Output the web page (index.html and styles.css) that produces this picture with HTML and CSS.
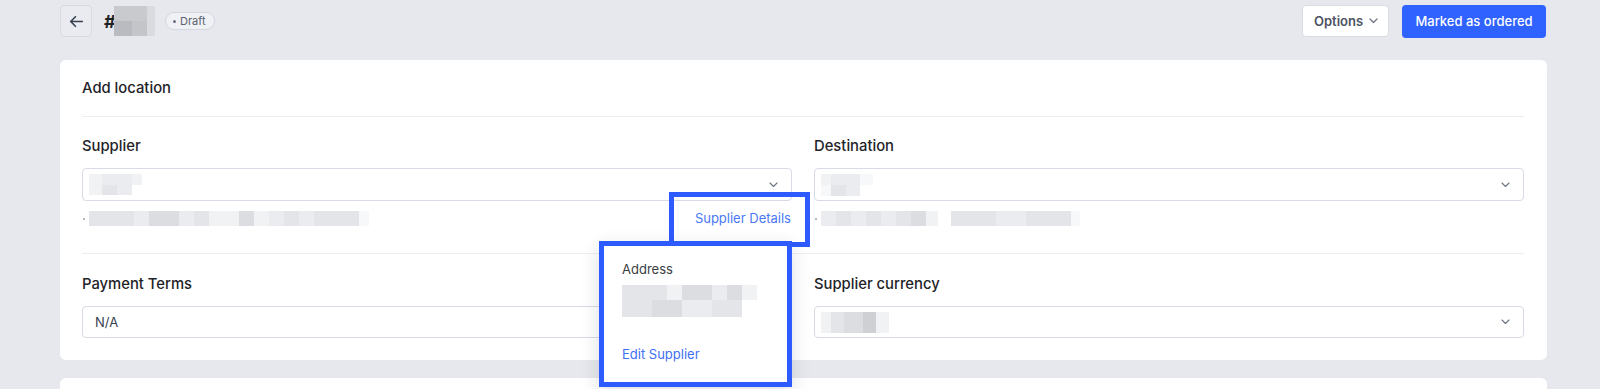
FILE: index.html
```html
<html>
  <head>
    <link rel="stylesheet" href="styles.css">
    <title>Purchase order</title>
  </head>
  <body>
    <div class="page">
      <div class="topbar">
        <div class="topbar-left">
          <button class="back-btn">
            <svg width="17" height="17" viewBox="0 0 16 16" fill="none" stroke="#374151" stroke-width="1.5" stroke-linecap="round" stroke-linejoin="round"><path d="M13.5 8H2.5M7 3.5L2.5 8 7 12.5"/></svg>
          </button>
          <div class="order-id">
            <span class="hash">#</span>
            <div class="blur">
              <div class="blur-row h15"><span class="d2 w18"></span><span class="d2 w15"></span><span class="d4 w8"></span></div>
              <div class="blur-row h15"><span class="d1 w18"></span><span class="d3 w15"></span><span class="d4 w8"></span></div>
            </div>
          </div>
          <span class="pill"><span class="pill-dot"></span>Draft</span>
        </div>
        <div class="topbar-right">
          <button class="btn btn-outline">Options
            <svg width="9" height="6" viewBox="0 0 9 6" fill="none" stroke="#6b7280" stroke-width="1.2" stroke-linecap="round" stroke-linejoin="round"><path d="M1 1l3.5 3.5L8 1"/></svg>
          </button>
          <button class="btn btn-primary">Marked as ordered</button>
        </div>
      </div>

      <div class="card">
        <div class="card-head">Add location</div>

        <div class="card-row">
          <div class="field">
            <div class="label">Supplier</div>
            <div class="select">
              <div class="blur">
                <div class="blur-row h11"><span class="g1 w13"></span><span class="g2 w15"></span><span class="g2 w15"></span><span class="g1 w10"></span></div>
                <div class="blur-row h10"><span class="g1 w13"></span><span class="g3 w15"></span><span class="g2 w15"></span></div>
              </div>
              <svg class="chevron" width="9" height="6" viewBox="0 0 9 6" fill="none" stroke="#6b7280" stroke-width="1.1" stroke-linecap="round" stroke-linejoin="round"><path d="M1 1l3.5 3.5L8 1"/></svg>
            </div>
            <div class="sub">
              <div class="sub-info">
                <span class="tiny-dot"></span>
                <div class="blur-row h15">
                  <span class="g3 w15"></span><span class="g3 w15"></span><span class="g3 w15"></span><span class="g2 w15"></span><span class="g4 w15"></span><span class="g4 w15"></span><span class="g2 w15"></span><span class="g3 w15"></span><span class="g1 w15"></span><span class="g1 w15"></span><span class="g4 w15"></span><span class="g1 w15"></span><span class="g2 w15"></span><span class="g3 w15"></span><span class="g2 w15"></span><span class="g3 w15"></span><span class="g3 w15"></span><span class="g3 w15"></span><span class="g0 w10"></span>
                </div>
              </div>
              <a class="details-link">Supplier Details</a>
            </div>
          </div>

          <div class="field">
            <div class="label">Destination</div>
            <div class="select">
              <div class="blur">
                <div class="blur-row h11"><span class="g1 w10"></span><span class="g2 w15"></span><span class="g2 w14"></span><span class="g0 w13"></span></div>
                <div class="blur-row h11"><span class="g0 w10"></span><span class="g3 w15"></span><span class="g2 w14"></span></div>
              </div>
              <svg class="chevron" width="9" height="6" viewBox="0 0 9 6" fill="none" stroke="#6b7280" stroke-width="1.1" stroke-linecap="round" stroke-linejoin="round"><path d="M1 1l3.5 3.5L8 1"/></svg>
            </div>
            <div class="sub">
              <div class="sub-info">
                <span class="tiny-dot"></span>
                <div class="blur-row h15">
                  <span class="g2 w15"></span><span class="g3 w15"></span><span class="g2 w15"></span><span class="g3 w15"></span><span class="g2 w15"></span><span class="g3 w15"></span><span class="g4 w15"></span><span class="g1 w12"></span>
                </div>
                <div class="blur-row h15 gap-left">
                  <span class="g3 w15"></span><span class="g3 w15"></span><span class="g3 w15"></span><span class="g2 w15"></span><span class="g2 w15"></span><span class="g3 w15"></span><span class="g3 w15"></span><span class="g3 w15"></span><span class="g0 w9"></span>
                </div>
              </div>
            </div>
          </div>
        </div>

        <div class="card-row last">
          <div class="field">
            <div class="label">Payment Terms</div>
            <div class="select">
              <span class="select-text">N/A</span>
              <svg class="chevron" width="9" height="6" viewBox="0 0 9 6" fill="none" stroke="#6b7280" stroke-width="1.1" stroke-linecap="round" stroke-linejoin="round"><path d="M1 1l3.5 3.5L8 1"/></svg>
            </div>
          </div>

          <div class="field">
            <div class="label">Supplier currency</div>
            <div class="select">
              <div class="blur">
                <div class="blur-row h21"><span class="g1 w10"></span><span class="g3 w13"></span><span class="g4 w19"></span><span class="g5 w13"></span><span class="g1 w13"></span></div>
              </div>
              <svg class="chevron" width="9" height="6" viewBox="0 0 9 6" fill="none" stroke="#6b7280" stroke-width="1.1" stroke-linecap="round" stroke-linejoin="round"><path d="M1 1l3.5 3.5L8 1"/></svg>
            </div>
          </div>
        </div>

        <div class="popover">
          <div class="popover-title">Address</div>
          <div class="blur">
            <div class="blur-row h15"><span class="g3 w15"></span><span class="g3 w15"></span><span class="g3 w15"></span><span class="g1 w15"></span><span class="g4 w15"></span><span class="g4 w15"></span><span class="g2 w15"></span><span class="g4 w15"></span><span class="g1 w15"></span></div>
            <div class="blur-row h17"><span class="g3 w15"></span><span class="g3 w15"></span><span class="g4 w15"></span><span class="g4 w15"></span><span class="g2 w15"></span><span class="g2 w15"></span><span class="g3 w15"></span><span class="g3 w15"></span></div>
          </div>
          <a class="edit-link">Edit Supplier</a>
        </div>
      </div>

      <div class="card next"></div>
    </div>
  </body>
</html>
```

FILE: styles.css
```css
body {
  margin: 0;
  background-color: #e6e8ed;
  font-family: Inter, "Noto Sans", sans-serif;
  color: #1f2328;
}
button {
  font-family: inherit;
  cursor: pointer;
}
a {
  cursor: pointer;
}

.page {
  padding: 5px 53px 0 60px;
}

/* top bar */
.topbar {
  display: flex;
  justify-content: space-between;
  align-items: center;
  height: 32px;
}
.topbar-left {
  display: flex;
  align-items: center;
}
.topbar-right {
  display: flex;
  align-items: center;
  gap: 13px;
  padding-right: 1px;
}
.back-btn {
  width: 32px;
  height: 32px;
  padding: 0;
  border: 1px solid #d7dae1;
  border-radius: 4px;
  background-color: #e9ebf0;
  display: flex;
  justify-content: center;
  align-items: center;
}
.order-id {
  display: flex;
  align-items: center;
  margin-left: 12px;
}
.hash {
  font-size: 18px;
  font-weight: 700;
  color: #1f2328;
  width: 10px;
}
.pill {
  margin-left: 10px;
  height: 18px;
  padding: 0 8px 0 7px;
  border: 1px solid #d3d7e0;
  border-radius: 9px;
  background-color: #eff1f5;
  font-size: 11px;
  color: #5b6170;
  display: flex;
  align-items: center;
  gap: 4px;
  box-sizing: border-box;
}
.pill-dot {
  width: 3px;
  height: 3px;
  border-radius: 50%;
  background-color: #6b7080;
}
.btn {
  height: 32px;
  border-radius: 4px;
  font-size: 13px;
  display: flex;
  align-items: center;
}
.btn-outline {
  width: 87px;
  padding: 0 0 0 11px;
  background-color: #ffffff;
  border: 1px solid #d9dce3;
  color: #4b5262;
  font-weight: 600;
  gap: 6px;
}
.btn-primary {
  width: 144px;
  height: 33px;
  justify-content: center;
  background-color: #2f62ff;
  border: none;
  color: #ffffff;
  font-weight: 500;
}

/* card */
.card {
  position: relative;
  margin-top: 23px;
  background-color: #ffffff;
  border-radius: 6px;
  padding: 0 23px 0 22px;
}
.card.next {
  margin-top: 18px;
  height: 40px;
}
.card-head {
  padding: 19px 0 19px;
  line-height: 18px;
  font-size: 14.8px;
  font-weight: 500;
  border-bottom: 1px solid #eceef2;
}
.card-row {
  display: grid;
  grid-template-columns: 1fr 1fr;
  column-gap: 22px;
  padding: 19px 0 26px;
  border-bottom: 1px solid #eceef2;
}
.card-row.last {
  padding: 20px 0 22px;
  border-bottom: none;
}
.label {
  font-size: 14.8px;
  font-weight: 500;
  line-height: 20px;
  margin-bottom: 12px;
  color: #1f2328;
}
.select {
  height: 33px;
  box-sizing: border-box;
  border: 1px solid #d8dbe5;
  border-radius: 4px;
  display: flex;
  align-items: center;
  justify-content: space-between;
  padding: 0 13px 0 6px;
}
.card-row.last .select {
  height: 32px;
}
.select-text {
  font-size: 13px;
  color: #374151;
  padding-left: 6px;
}
.sub {
  margin-top: 8px;
  height: 18px;
  display: flex;
  justify-content: space-between;
  align-items: center;
}
.sub-info {
  display: flex;
  align-items: center;
}
.tiny-dot {
  width: 2px;
  height: 2px;
  background-color: #b6b9c0;
  margin: 2px 4px 0 1px;
}
.details-link {
  position: relative;
  font-size: 13px;
  line-height: 18px;
  color: #4a78f5;
  padding-right: 1px;
}
/* highlight frame drawn over the screenshot */
.details-link::after {
  content: '';
  position: absolute;
  top: -17px;
  bottom: -20px;
  left: -26px;
  right: -18px;
  border: 5px solid #2e5bff;
}

/* pixelated placeholders */
.blur {
  display: flex;
  flex-direction: column;
}
.blur-row {
  display: flex;
}
.blur-row > span {
  display: block;
  height: 100%;
}
.gap-left {
  margin-left: 13px;
}
.h10 { height: 10px; }
.h11 { height: 11px; }
.h15 { height: 15px; }
.h17 { height: 17px; }
.h21 { height: 21px; }
.w8 { width: 8px; }
.w9 { width: 9px; }
.w10 { width: 10px; }
.w12 { width: 12px; }
.w13 { width: 13px; }
.w14 { width: 14px; }
.w15 { width: 15px; }
.w18 { width: 18px; }
.w19 { width: 19px; }
.g0 { background-color: #f7f8f9; }
.g1 { background-color: #f1f2f4; }
.g2 { background-color: #ebecef; }
.g3 { background-color: #e4e5e9; }
.g4 { background-color: #dcdde1; }
.g5 { background-color: #cfd0d4; }
.d1 { background-color: #b9bbc0; }
.d2 { background-color: #c8cace; }
.d3 { background-color: #c3c5c9; }
.d4 { background-color: #d9dbdf; }

/* popover */
.popover {
  position: absolute;
  z-index: 5;
  left: 539px;
  top: 181px;
  width: 193px;
  height: 146px;
  box-sizing: border-box;
  background-color: #ffffff;
  border: 5px solid #2e5bff;
  box-shadow: 0 6px 18px rgba(20, 30, 60, 0.14);
  padding: 15px 18px 0;
}
.popover-title {
  font-size: 13px;
  line-height: 16px;
  color: #3a3d44;
  margin-bottom: 8px;
}
.edit-link {
  display: block;
  margin-top: 29px;
  font-size: 13px;
  line-height: 16px;
  color: #3f6ff5;
}
```
